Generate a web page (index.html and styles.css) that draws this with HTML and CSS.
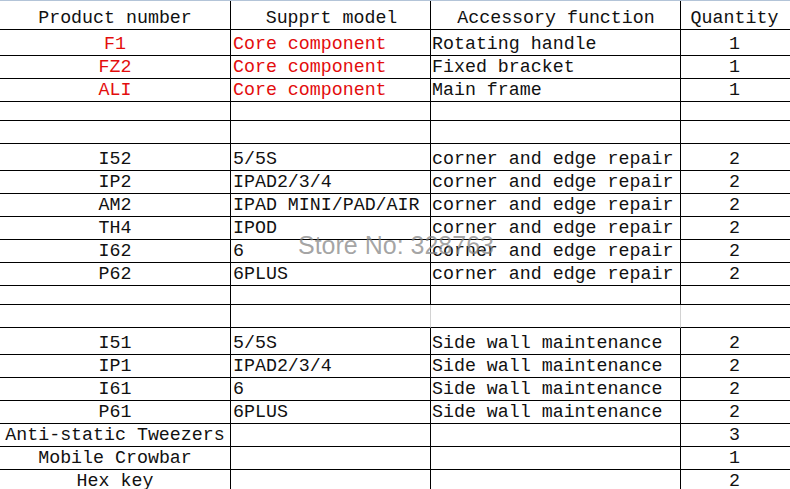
FILE: index.html
```html
<!DOCTYPE html>
<html>
<head>
<meta charset="utf-8">
<link rel="stylesheet" href="styles.css">
</head>
<body>
<div class="sheet">
  <div class="row head">
    <div class="c c1">Product number</div>
    <div class="c c2">Supprt model</div>
    <div class="c c3">Accessory function</div>
    <div class="c c4">Quantity</div>
  </div>
  <div class="row">
    <div class="c c1 red">F1</div>
    <div class="c c2 red">Core component</div>
    <div class="c c3">Rotating handle</div>
    <div class="c c4">1</div>
  </div>
  <div class="row">
    <div class="c c1 red">FZ2</div>
    <div class="c c2 red">Core component</div>
    <div class="c c3">Fixed bracket</div>
    <div class="c c4">1</div>
  </div>
  <div class="row">
    <div class="c c1 red">ALI</div>
    <div class="c c2 red">Core component</div>
    <div class="c c3">Main frame</div>
    <div class="c c4">1</div>
  </div>
  <div class="row">
    <div class="c c1"></div><div class="c c2"></div><div class="c c3"></div><div class="c c4"></div>
  </div>
  <div class="row">
    <div class="c c1"></div><div class="c c2"></div><div class="c c3"></div><div class="c c4"></div>
  </div>
  <div class="row">
    <div class="c c1">I52</div>
    <div class="c c2">5/5S</div>
    <div class="c c3">corner and edge repair</div>
    <div class="c c4">2</div>
  </div>
  <div class="row">
    <div class="c c1">IP2</div>
    <div class="c c2">IPAD2/3/4</div>
    <div class="c c3">corner and edge repair</div>
    <div class="c c4">2</div>
  </div>
  <div class="row">
    <div class="c c1">AM2</div>
    <div class="c c2">IPAD MINI/PAD/AIR</div>
    <div class="c c3">corner and edge repair</div>
    <div class="c c4">2</div>
  </div>
  <div class="row">
    <div class="c c1">TH4</div>
    <div class="c c2">IPOD</div>
    <div class="c c3">corner and edge repair</div>
    <div class="c c4">2</div>
  </div>
  <div class="row">
    <div class="c c1">I62</div>
    <div class="c c2">6</div>
    <div class="c c3">corner and edge repair</div>
    <div class="c c4">2</div>
  </div>
  <div class="row">
    <div class="c c1">P62</div>
    <div class="c c2">6PLUS</div>
    <div class="c c3">corner and edge repair</div>
    <div class="c c4">2</div>
  </div>
  <div class="row">
    <div class="c c1"></div><div class="c c2"></div><div class="c c3"></div><div class="c c4"></div>
  </div>
  <div class="row">
    <div class="c c1"></div><div class="c c2 faint"></div><div class="c c3 faint"></div><div class="c c4"></div>
  </div>
  <div class="row">
    <div class="c c1">I51</div>
    <div class="c c2">5/5S</div>
    <div class="c c3">Side wall maintenance</div>
    <div class="c c4">2</div>
  </div>
  <div class="row">
    <div class="c c1">IP1</div>
    <div class="c c2">IPAD2/3/4</div>
    <div class="c c3">Side wall maintenance</div>
    <div class="c c4">2</div>
  </div>
  <div class="row">
    <div class="c c1">I61</div>
    <div class="c c2">6</div>
    <div class="c c3">Side wall maintenance</div>
    <div class="c c4">2</div>
  </div>
  <div class="row">
    <div class="c c1">P61</div>
    <div class="c c2">6PLUS</div>
    <div class="c c3">Side wall maintenance</div>
    <div class="c c4">2</div>
  </div>
  <div class="row">
    <div class="c c1">Anti-static Tweezers</div>
    <div class="c c2"></div>
    <div class="c c3"></div>
    <div class="c c4">3</div>
  </div>
  <div class="row">
    <div class="c c1">Mobile Crowbar</div>
    <div class="c c2"></div>
    <div class="c c3"></div>
    <div class="c c4">1</div>
  </div>
  <div class="row last">
    <div class="c c1">Hex key</div>
    <div class="c c2"></div>
    <div class="c c3"></div>
    <div class="c c4">2</div>
  </div>
  <div class="watermark">Store No: 328763</div>
</div>
</body>
</html>
```
FILE: styles.css
```css
html, body {
  margin: 0;
  padding: 0;
  background: #ffffff;
}

.sheet {
  position: relative;
  width: 790px;
  height: 489px;
  overflow: hidden;
  border-top: 1px solid #b3c4d8;
  box-sizing: border-box;
  font-family: "Liberation Mono", "DejaVu Sans Mono", monospace;
  font-size: 18.3px;
  color: #111111;
}

.row {
  display: grid;
  grid-template-columns: 231px 200px 250px 109px;
  height: 23px;
}

.row.head {
  height: 28px;
}

.c {
  box-sizing: border-box;
  height: 100%;
  border-bottom: 1px solid #000000;
  border-right: 1px solid #000000;
  line-height: 22px;
  padding-top: 4px;
  white-space: nowrap;
  overflow: visible;
}

.head .c {
  padding-top: 6px;
  text-align: center;
}

.last .c {
  border-bottom-color: #b3c4d8;
}

.c1 {
  text-align: center;
}

.c2 {
  padding-left: 2px;
}

.c3 {
  padding-left: 1px;
}

.c4 {
  border-right: none;
  text-align: center;
  padding-right: 2px;
}

.c2.faint,
.c3.faint {
  border-right-color: #d2d2d2;
}

.red {
  color: #e30d0d;
}

.watermark {
  position: absolute;
  left: 298px;
  top: 232px;
  font-family: "Liberation Sans", Arial, sans-serif;
  font-size: 25px;
  line-height: 25px;
  color: rgba(130, 130, 130, 0.72);
  white-space: nowrap;
}
```
